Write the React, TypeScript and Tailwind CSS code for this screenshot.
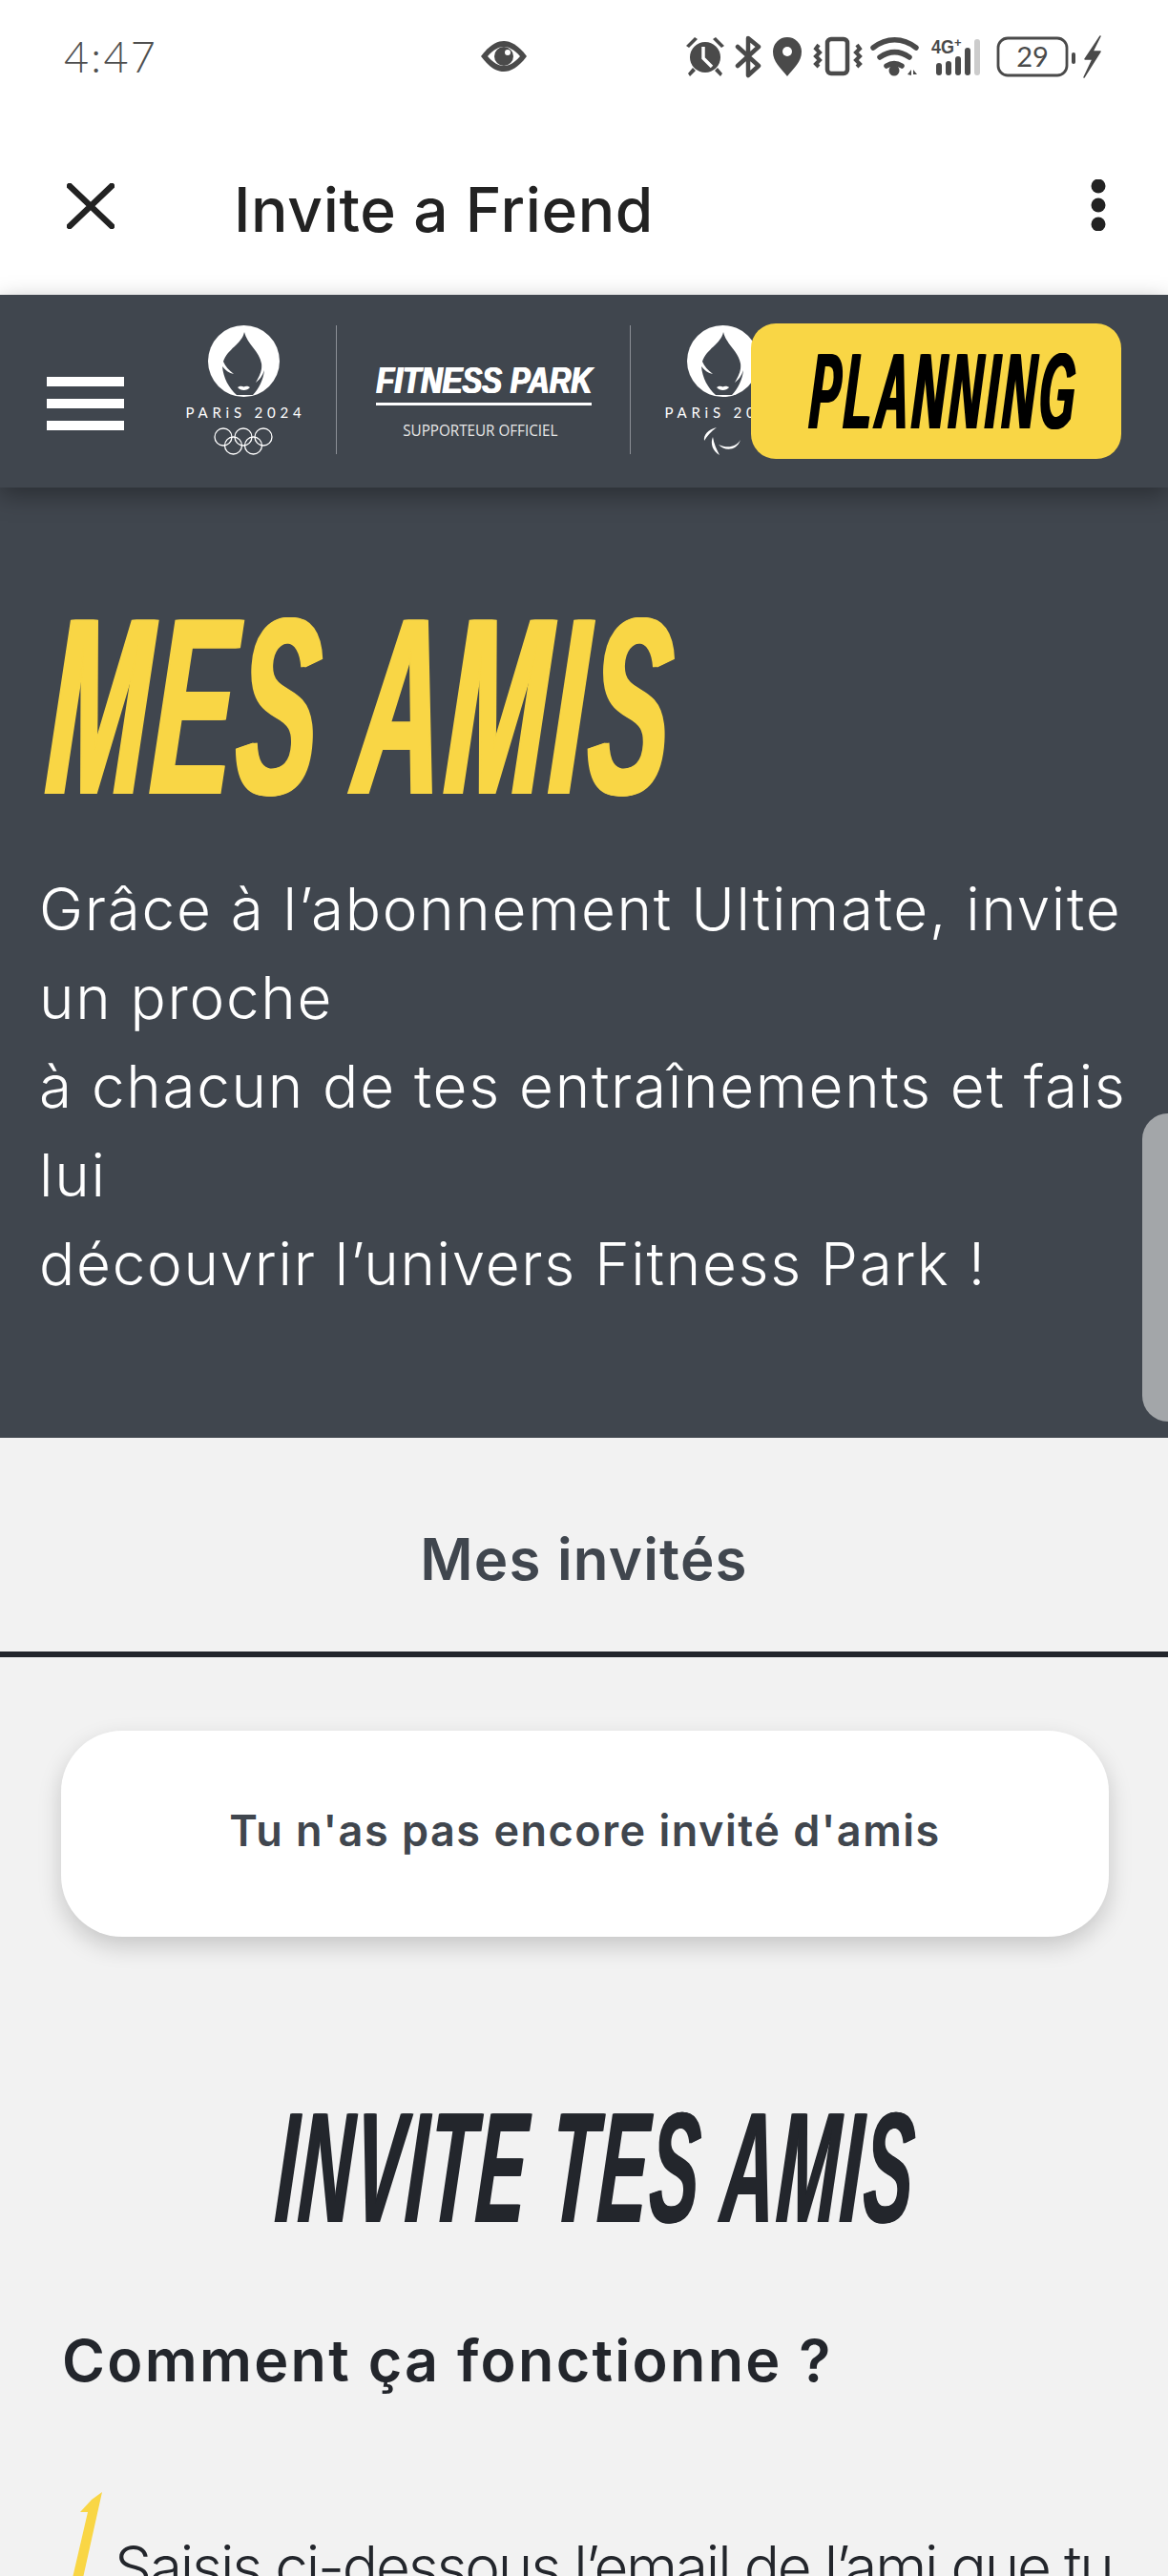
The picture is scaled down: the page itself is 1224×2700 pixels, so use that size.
const Rings = () => (
  <svg width="62" height="29" viewBox="0 0 62 29" fill="none" stroke="white" strokeWidth="1.3">
    <circle cx="10" cy="10" r="9" />
    <circle cx="31" cy="10" r="9" />
    <circle cx="52" cy="10" r="9" />
    <circle cx="20.5" cy="19" r="9" />
    <circle cx="41.5" cy="19" r="9" />
  </svg>
);

const Agitos = () => (
  <svg width="40" height="29" viewBox="0 0 40 29" fill="white">
    <path d="M14 0C5 2 0 8 1 14 4 9 8 4 14 0Z" />
    <path d="M10 10C7 17 10 25 17 29 14 23 11 17 10 10Z" />
    <path d="M39 13C34 21 25 22 16 18 22 25 35 25 39 13Z" />
  </svg>
);

const Flame = () => (
  <svg width="75" height="75" viewBox="0 0 75 75">
    <circle cx="37.5" cy="37.5" r="37.5" fill="white" />
    <path
      d="M38 7C36 19 20 25 16 38 18 43 22 47 27 51 22 50 18 47 15 43 16 55 22 66 30 73L47 73C53 67 58 57 59 47 57 53 54 57 50 60 54 53 57 47 56 40 54 27 41 20 38 7Z"
      fill="#40464e"
    />
    <path d="M31 65C34 63 36 64 37.500 64.500 39 64 41 63 44 65 41 69 34 69 31 65Z" fill="white" />
  </svg>
);

const ParisLogo = ({ para }: { para?: boolean }) => (
  <div className="flex flex-col items-center w-[120px] shrink-0">
    <Flame />
    <div className="mt-[8px] pl-[5px] text-[15px] leading-[16px] tracking-[4.8px] text-white whitespace-nowrap font-['Lato',sans-serif]">
      PARiS 2024
    </div>
    <div className="mt-[8px]">{para ? <Agitos /> : <Rings />}</div>
  </div>
);

const StatusIcons = () => (
  <svg width="440" height="46" viewBox="0 0 440 46" fill="#4a4a4a" className="shrink-0">
    {/* alarm */}
    <circle cx="23" cy="24" r="16" />
    <path d="M3 12l9-9 3 2-9 9zM43 12l-9-9-3 2 9 9zM10 35l-5 6 2 3 6-6zM36 35l5 6-2 3-6-6z" />
    <path d="M21 13v12l9 9" stroke="white" strokeWidth="3.500" fill="none" />
    {/* bluetooth */}
    <path d="M57 13l22 20-11 10V4l11 9-22 20" stroke="#4a4a4a" strokeWidth="4.500" fill="none" strokeLinejoin="round" strokeLinecap="round" />
    {/* pin */}
    <path d="M109 44C102 35 94 29 94 18a15 15 0 0 1 30 0c0 11-8 17-15 26z" />
    <circle cx="109" cy="18" r="5" fill="white" />
    {/* vibrate */}
    <rect x="151" y="5" width="21" height="36" rx="4" fill="none" stroke="#4a4a4a" strokeWidth="4.500" />
    <path d="M142 11l-3 4 4 4-4 4 4 4-4 4 3 3M182 11l3 4-4 4 4 4-4 4 4 4-3 3" fill="none" stroke="#4a4a4a" strokeWidth="4" />
    {/* wifi */}
    <path d="M199 14c14-11 31-11 45 0M206 24c10-7 21-7 31 0M213 33c5-3 11-3 16 0" fill="none" stroke="#4a4a4a" strokeWidth="5.500" strokeLinecap="round" />
    <circle cx="221" cy="38" r="5.500" />
    <path d="M235 42l4-5v6zM241 37l4 5h-4z" />
    {/* signal */}
    <text x="260" y="20" fontSize="21" fontWeight="700" fontFamily="Liberation Sans, sans-serif" textLength="24" lengthAdjust="spacingAndGlyphs">4G</text>
    <text x="284" y="13" fontSize="13" fontWeight="700" fontFamily="Liberation Sans, sans-serif">+</text>
    <rect x="265" y="30" width="6" height="13" rx="3" />
    <rect x="275" y="28" width="6" height="15" rx="3" />
    <rect x="285" y="23" width="6" height="20" rx="3" />
    <rect x="295" y="14" width="6" height="29" rx="3" />
    <rect x="305" y="5" width="6" height="38" rx="3" fill="#cccccc" />
    {/* battery */}
    <rect x="330" y="4" width="72" height="39" rx="10" fill="none" stroke="#4a4a4a" strokeWidth="2.800" />
    <text x="366" y="34" fontSize="29" textAnchor="middle" fontFamily="Lato, sans-serif">29</text>
    <rect x="407" y="19" width="4" height="12" rx="2" />
    <path d="M437 2l-16 24h8l-9 19 17-27h-8z" stroke="#4a4a4a" strokeWidth="1.500" strokeLinejoin="round" />
  </svg>
);

export default function App() {
  return (
    <div className="w-[1224px] h-[2700px] overflow-hidden flex flex-col bg-[#f2f2f2] font-['Inter',sans-serif]">
      <div className="bg-white h-[309px] shrink-0 flex flex-col">
        <div className="h-[118px] flex items-center pl-[67px]">
          <span className="w-[436px] shrink-0 text-[45px] leading-none tracking-[0.05em] text-[#4f4f4f] font-['Lato',sans-serif] font-light">4:47</span>
          <svg width="50" height="36" viewBox="0 0 50 36" className="shrink-0">
            <path d="M1 18C10 6 18 2 25 2s15 4 24 16C40 30 32 34 25 34S10 30 1 18Z" fill="#4a4a4a" />
            <path d="M8 18C14 11 20 8 25 8s11 3 17 10c-6 7-12 10-17 10S14 25 8 18Z" fill="white" />
            <circle cx="25" cy="18" r="10" fill="#4a4a4a" />
            <circle cx="29" cy="14" r="3" fill="white" />
          </svg>
          <div className="ml-[163px]">
            <StatusIcons />
          </div>
        </div>
        <div className="flex-1 flex items-center pl-[70px] pr-[65px]">
          <svg width="50" height="48" viewBox="0 0 50 48" stroke="#222222" strokeWidth="6.500" strokeLinecap="round" className="shrink-0 mt-[4px]">
            <path d="M3 3l44 42M47 3L3 45" />
          </svg>
          <h1 className="ml-[125px] pt-[12px] text-[64px] leading-none font-medium text-[#222222] tracking-[0.01em] whitespace-nowrap">Invite a Friend</h1>
          <svg width="16" height="54" viewBox="0 0 16 54" fill="#222222" className="ml-auto shrink-0 mt-[2px]">
            <circle cx="8" cy="7" r="7.500" />
            <circle cx="8" cy="27" r="7.500" />
            <circle cx="8" cy="47" r="7.500" />
          </svg>
        </div>
      </div>

      <div className="relative z-10 h-[202px] shrink-0 bg-[#40464e] shadow-[0_8px_24px_rgba(0,0,0,0.35)] flex items-start overflow-hidden">
        <div className="ml-[49px] mt-[86px] w-[81px] flex flex-col gap-[13px] shrink-0">
          <div className="h-[10px] bg-white" />
          <div className="h-[10px] bg-white" />
          <div className="h-[10px] bg-white" />
        </div>
        <div className="ml-[65px] mt-[32px] flex items-start">
          <ParisLogo />
          <div className="ml-[37px] w-px h-[135px] bg-[#8b8f96]" />
          <div className="w-[307px] flex flex-col items-center pt-[36px] pl-[4px]">
            <div className="-ml-[2px] text-[39px] leading-[44px] font-bold italic text-white font-['Liberation_Sans',sans-serif] scale-x-[0.8] whitespace-nowrap [text-shadow:1px_0_0_white,-1px_0_0_white]">FITNESS PARK</div>
            <div className="w-[226px] h-[3px] bg-white mt-[1px] -ml-[4px]" />
            <div className="-ml-[10px] mt-[17px] text-[16px] leading-[18px] text-[#e8e8e8] font-['Open_Sans',sans-serif] whitespace-nowrap scale-x-[0.95]">SUPPORTEUR OFFICIEL</div>
          </div>
          <div className="w-px h-[135px] bg-[#8b8f96]" />
          <div className="ml-[36px]">
            <ParisLogo para />
          </div>
        </div>
        <div className="absolute left-[787px] top-[30px] w-[388px] h-[142px] rounded-[26px] bg-[#f9d645] flex items-center justify-center pl-[18px]">
          <span className="shrink-0 text-[113px] leading-none font-bold italic text-black font-['Liberation_Sans',sans-serif] tracking-[10px] scale-x-[0.42] -skew-x-[7deg] whitespace-nowrap [text-shadow:3px_0_0_black,-3px_0_0_black]">PLANNING</span>
        </div>
      </div>

      <div className="relative h-[996px] shrink-0 bg-[#40464e] pl-[52px] pt-[97px]">
        <h2 className="w-max text-[265px] leading-[265px] font-bold italic text-[#f9d645] font-['Liberation_Sans',sans-serif] tracking-[10px] origin-left scale-x-[0.475] -skew-x-[7deg] whitespace-nowrap [text-shadow:3px_0_0_#f9d645,-3px_0_0_#f9d645,5px_0_0_#f9d645,-5px_0_0_#f9d645]">MES AMIS</h2>
        <p className="-ml-[11px] mt-[33px] text-[62px] leading-[93px] font-light text-white tracking-[1.7px] whitespace-nowrap">
          Grâce à l’abonnement Ultimate, invite
          <br />un proche
          <br />à chacun de tes entraînements et fais
          <br />lui
          <br />découvrir l’univers Fitness Park !
        </p>
        <div className="absolute right-0 top-[656px] w-[27px] h-[323px] rounded-l-[30px] bg-[#a3a6a9]" />
      </div>

      <div className="h-[230px] shrink-0 border-b-[6px] border-[#23262c] flex items-center justify-center pt-[30px]">
        <span className="text-[60px] font-semibold text-[#40464e] tracking-[1.2px]">Mes invités</span>
      </div>

      <div className="ml-[64px] mr-[62px] mt-[77px] h-[216px] shrink-0 rounded-[64px] bg-white shadow-[0_10px_24px_rgba(0,0,0,0.18)] flex items-center justify-center pb-[6px]">
        <span className="text-[45px] font-semibold text-[#40464e] tracking-[1.5px]">Tu n'as pas encore invité d'amis</span>
      </div>

      <div className="mt-[160px] flex justify-center pl-[27px] shrink-0">
        <h2 className="w-max shrink-0 text-[165px] leading-[165px] font-bold italic text-[#23262c] font-['Liberation_Sans',sans-serif] tracking-[6px] scale-x-[0.465] -skew-x-[7deg] whitespace-nowrap [text-shadow:2px_0_0_#23262c,-2px_0_0_#23262c]">INVITE TES AMIS</h2>
      </div>

      <h3 className="mt-[83px] ml-[65px] text-[61px] leading-[72px] font-semibold text-[#23262c] tracking-[2.3px] shrink-0">Comment ça fonctionne ?</h3>

      <div className="relative mt-[102px] pl-[120px] shrink-0">
        <svg width="38" height="90" viewBox="0 0 38 90" className="absolute left-[70px] top-0">
          <path d="M37 0L26 8 14 21H22L6 90H17L37 0Z" fill="#f9d645" />
        </svg>
        <p className="pt-[32px] text-[62px] leading-[93px] font-light text-[#23262c] tracking-[-2.2px] whitespace-nowrap">Saisis ci-dessous l’email de l’ami que tu</p>
      </div>
    </div>
  );
}
